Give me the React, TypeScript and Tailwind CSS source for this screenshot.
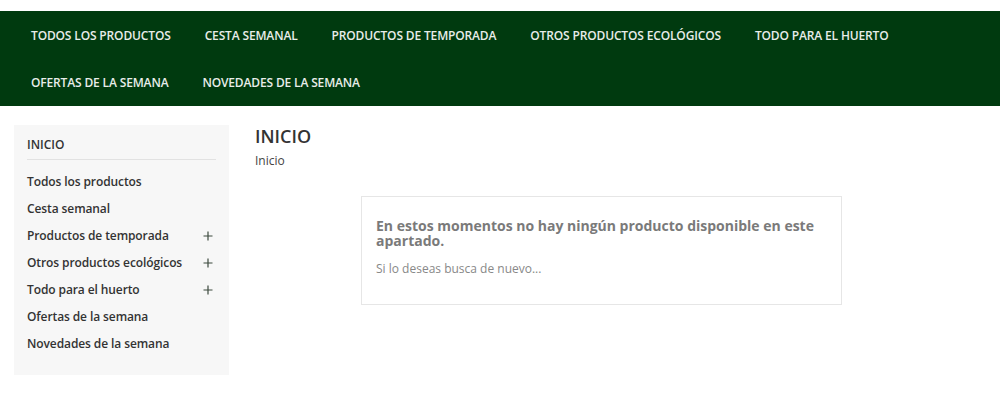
import React from "react";

const topLinks = [
  "TODOS LOS PRODUCTOS",
  "CESTA SEMANAL",
  "PRODUCTOS DE TEMPORADA",
  "OTROS PRODUCTOS ECOLÓGICOS",
  "TODO PARA EL HUERTO",
  "OFERTAS DE LA SEMANA",
  "NOVEDADES DE LA SEMANA",
];

const sideLinks = [
  { label: "Todos los productos", more: false },
  { label: "Cesta semanal", more: false },
  { label: "Productos de temporada", more: true },
  { label: "Otros productos ecológicos", more: true },
  { label: "Todo para el huerto", more: true },
  { label: "Ofertas de la semana", more: false },
  { label: "Novedades de la semana", more: false },
];

const Plus = () => (
  <svg width="10" height="10" viewBox="0 0 10 10" className="text-[#3c4a3e]">
    <path d="M5 0.5v9M0.5 5h9" stroke="currentColor" strokeWidth="1.2" fill="none" />
  </svg>
);

export default function App() {
  return (
    <div
      className="w-[1000px] h-[394px] bg-white text-[#333]"
      style={{ fontFamily: '"Open Sans", "Liberation Sans", sans-serif' }}
    >
      <div className="h-[11px]" />
      <nav className="bg-[#003a0f] px-[14px] pt-[1px]">
        <ul className="flex flex-wrap">
          {topLinks.map((l) => (
            <li
              key={l}
              className="h-[47px] px-[17px] flex items-center text-[12px] font-semibold text-[#e8ede9] tracking-[-0.15px]"
            >
              {l}
            </li>
          ))}
        </ul>
      </nav>

      <div className="flex pl-[14px] pt-[19px]">
        <aside className="w-[215px] h-[250px] bg-[#f7f7f7] px-[13px] pt-[11px]">
          <div className="text-[12px] font-semibold text-[#333] leading-[17px] pb-[6px] border-b border-[#e2e2e2]">
            INICIO
          </div>
          <ul className="pt-[8px]">
            {sideLinks.map((s) => (
              <li
                key={s.label}
                className="h-[27px] flex items-center justify-between text-[12px] font-semibold text-[#333] tracking-[-0.1px] pr-[3px]"
              >
                <span>{s.label}</span>
                {s.more && <Plus />}
              </li>
            ))}
          </ul>
        </aside>

        <main className="flex-1 pl-[26px]">
          <h1 className="text-[18px] font-semibold text-[#333] leading-[22px]">INICIO</h1>
          <p className="text-[12px] text-[#444] leading-[20px] mt-[4px]">Inicio</p>

          <div className="ml-[106px] mt-[25px] w-[481px] h-[109px] border border-[#e6e6e6] px-[14px] pt-[21px]">
            <p className="text-[14px] font-bold text-[#7a7a7a] leading-[15px]">
              En estos momentos no hay ningún producto disponible en este apartado.
            </p>
            <p className="text-[12px] text-[#888] leading-[18px] mt-[12px]">Si lo deseas busca de nuevo...</p>
          </div>
        </main>
      </div>
    </div>
  );
}
